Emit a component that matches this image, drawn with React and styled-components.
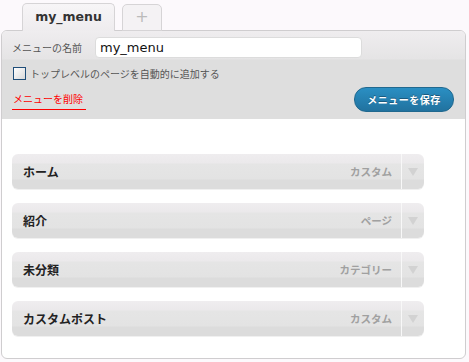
import React from 'react';
import styled, { createGlobalStyle } from 'styled-components';

const Global = createGlobalStyle`
  html, body { margin: 0; padding: 0; background: #fcf9fc; }
  body { font-family: "Noto Sans CJK JP", "DejaVu Sans", sans-serif; }
`;

const Page = styled.div`
  width: 469px;
  height: 362px;
  padding-top: 3px;
  box-sizing: border-box;
`;

const Tabs = styled.div`
  display: flex;
  align-items: flex-end;
  gap: 7px;
  margin-left: 22px;
  height: 28px;
  position: relative;
  z-index: 1;
`;

const Tab = styled.div`
  box-sizing: border-box;
  width: ${p => p.$w}px;
  height: ${p => (p.$active ? 28 : 27)}px;
  border: 1px solid #d6d4d6;
  border-bottom: ${p => (p.$active ? 'none' : '1px solid #d6d4d6')};
  border-radius: 5px 5px 0 0;
  background: ${p => (p.$active ? 'linear-gradient(#f7f5f7, #eeecee)' : '#f4f2f4')};
  display: flex;
  align-items: center;
  justify-content: center;
  font-family: Verdana, "DejaVu Sans", sans-serif;
  font-size: ${p => (p.$active ? 12.5 : 16)}px;
  font-weight: ${p => (p.$active ? 'bold' : 'normal')};
  color: ${p => (p.$active ? '#333' : '#bbb')};
  padding-bottom: 2px;
`;

const Panel = styled.div`
  margin-left: 1px;
  margin-top: -1px;
  width: 465px;
  height: 329px;
  box-sizing: border-box;
  border: 1px solid #cfcdcf;
  border-radius: 6px;
  background: #fff;
  overflow: hidden;
`;

const Header = styled.div`
  height: 88px;
  box-sizing: border-box;
  background: linear-gradient(#efedef 0, #e5e4e5 28px, #dedede 29px, #dedede 100%);
  padding: 6px 10px 0 10px;
  display: flex;
  flex-direction: column;
`;

const NameRow = styled.div`
  display: flex;
  align-items: center;
  height: 21px;
`;

const Label = styled.span`
  font-size: 10px;
  color: #555;
  width: 83px;
`;

const NameInput = styled.div`
  width: 267px;
  height: 21px;
  box-sizing: border-box;
  background: #fff;
  border: 1px solid #dcdcdc;
  border-radius: 4px;
  font-family: Verdana, "DejaVu Sans", sans-serif;
  font-size: 13px;
  color: #111;
  padding-left: 4px;
  display: flex;
  align-items: center;
`;

const CheckRow = styled.label`
  display: flex;
  align-items: center;
  gap: 4px;
  margin-top: 8px;
  margin-left: 1px;
  font-size: 10px;
  color: #555;
`;

const Box = styled.span`
  width: 13px;
  height: 13px;
  box-sizing: border-box;
  border: 1px solid #1f4e79;
  background: linear-gradient(135deg, #fff, #d9d9d9);
`;

const ActionRow = styled.div`
  display: flex;
  justify-content: space-between;
  align-items: flex-start;
  margin-top: 6px;
`;

const Delete = styled.span`
  font-size: 10px;
  color: #f00;
  border-bottom: 1px solid #f00;
  padding: 0 3px 3px 1px;
  margin-top: 4px;
`;

const SaveButton = styled.span`
  width: 100px;
  height: 25px;
  margin-right: 1px;
  box-sizing: border-box;
  border-radius: 12px;
  border: 1px solid #21698f;
  background: linear-gradient(#2a8fc3, #21729f);
  color: #fff;
  font-size: 10px;
  letter-spacing: 0.5px;
  font-weight: bold;
  display: flex;
  align-items: center;
  justify-content: center;
  text-shadow: 0 -1px 0 #1a5a7e;
`;

const List = styled.div`
  display: flex;
  flex-direction: column;
  gap: 14px;
  padding: 35px 0 0 10px;
`;

const Item = styled.div`
  width: 412px;
  height: 35px;
  box-sizing: border-box;
  border-radius: 6px;
  background: linear-gradient(#efedef 0, #ebe9eb 9px, #e5e5e5 10px, #e3e3e3 25px, #dcdcdc 26px, #dcdcdc 100%);
  box-shadow: 0 1px 0 #f0f0f0;
  display: flex;
  align-items: center;
`;

const Title = styled.span`
  flex: 1;
  padding-left: 11px;
  font-size: 12px;
  font-weight: bold;
  color: #222;
`;

const Kind = styled.span`
  font-size: 10.5px;
  font-weight: bold;
  color: #a0a0a0;
  margin-right: 9px;
`;

const Toggle = styled.span`
  width: 22px;
  height: 100%;
  border-left: 1px solid #f8f8f8;
  display: flex;
  align-items: center;
  justify-content: center;
`;

const items = [
  ['ホーム', 'カスタム'],
  ['紹介', 'ページ'],
  ['未分類', 'カテゴリー'],
  ['カスタムポスト', 'カスタム'],
];

export default function App() {
  return (
    <Page>
      <Global />
      <Tabs>
        <Tab $active $w={93}>my_menu</Tab>
        <Tab $w={40}>+</Tab>
      </Tabs>
      <Panel>
        <Header>
          <NameRow>
            <Label>メニューの名前</Label>
            <NameInput>my_menu</NameInput>
          </NameRow>
          <CheckRow>
            <Box />
            トップレベルのページを自動的に追加する
          </CheckRow>
          <ActionRow>
            <Delete>メニューを削除</Delete>
            <SaveButton>メニューを保存</SaveButton>
          </ActionRow>
        </Header>
        <List>
          {items.map(([t, k]) => (
            <Item key={t}>
              <Title>{t}</Title>
              <Kind>{k}</Kind>
              <Toggle>
                <svg width="10" height="8" viewBox="0 0 10 8">
                  <path d="M0 0 H10 L5 8 Z" fill="#d2d2d2" />
                </svg>
              </Toggle>
            </Item>
          ))}
        </List>
      </Panel>
    </Page>
  );
}
